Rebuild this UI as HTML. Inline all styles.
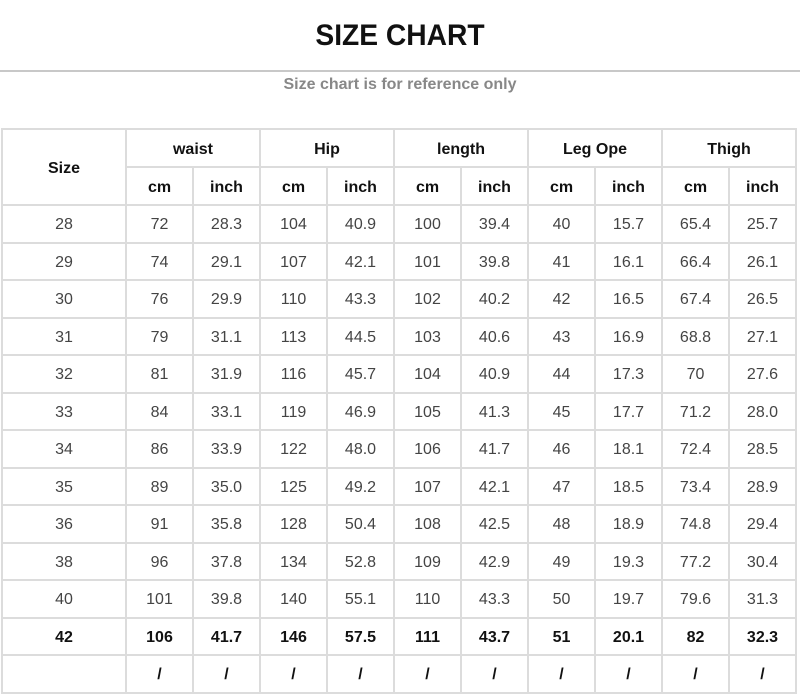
<!DOCTYPE html>
<html><head><style>
body{margin:0;width:800px;height:692px;background:#fff;font-family:"Liberation Sans",Arial,sans-serif;position:relative;overflow:hidden}
.t{position:absolute;top:19px;left:0;width:800px;text-align:center;font-size:30px;font-weight:bold;color:#111;transform:scaleX(0.94)}
.hr{position:absolute;top:70px;left:0;width:800px;height:2px;background:#c8c8c8}
.s{position:absolute;top:76px;left:0;width:800px;text-align:center;font-size:16px;font-weight:bold;color:#888}
table{position:absolute;top:128px;left:1px;border-collapse:collapse;table-layout:fixed}
td{border:2px solid #dcdcdc;text-align:center;font-size:16px;color:#444;padding:3px 0 0 0;height:32.5px}
.h td,.h2 td{font-weight:bold;color:#111;height:33px}
.b td{font-weight:bold;color:#111}
</style></head><body>
<div class="t">SIZE CHART</div>
<div class="hr"></div>
<div class="s">Size chart is for reference only</div>
<table>
<colgroup><col style="width:124px"><col span="10" style="width:67px"></colgroup>
<tr class="h"><td rowspan="2">Size</td><td colspan="2">waist</td><td colspan="2">Hip</td><td colspan="2">length</td><td colspan="2">Leg Ope</td><td colspan="2">Thigh</td></tr>
<tr class="h2"><td>cm</td><td>inch</td><td>cm</td><td>inch</td><td>cm</td><td>inch</td><td>cm</td><td>inch</td><td>cm</td><td>inch</td></tr>
<tr><td>28</td><td>72</td><td>28.3</td><td>104</td><td>40.9</td><td>100</td><td>39.4</td><td>40</td><td>15.7</td><td>65.4</td><td>25.7</td></tr>
<tr><td>29</td><td>74</td><td>29.1</td><td>107</td><td>42.1</td><td>101</td><td>39.8</td><td>41</td><td>16.1</td><td>66.4</td><td>26.1</td></tr>
<tr><td>30</td><td>76</td><td>29.9</td><td>110</td><td>43.3</td><td>102</td><td>40.2</td><td>42</td><td>16.5</td><td>67.4</td><td>26.5</td></tr>
<tr><td>31</td><td>79</td><td>31.1</td><td>113</td><td>44.5</td><td>103</td><td>40.6</td><td>43</td><td>16.9</td><td>68.8</td><td>27.1</td></tr>
<tr><td>32</td><td>81</td><td>31.9</td><td>116</td><td>45.7</td><td>104</td><td>40.9</td><td>44</td><td>17.3</td><td>70</td><td>27.6</td></tr>
<tr><td>33</td><td>84</td><td>33.1</td><td>119</td><td>46.9</td><td>105</td><td>41.3</td><td>45</td><td>17.7</td><td>71.2</td><td>28.0</td></tr>
<tr><td>34</td><td>86</td><td>33.9</td><td>122</td><td>48.0</td><td>106</td><td>41.7</td><td>46</td><td>18.1</td><td>72.4</td><td>28.5</td></tr>
<tr><td>35</td><td>89</td><td>35.0</td><td>125</td><td>49.2</td><td>107</td><td>42.1</td><td>47</td><td>18.5</td><td>73.4</td><td>28.9</td></tr>
<tr><td>36</td><td>91</td><td>35.8</td><td>128</td><td>50.4</td><td>108</td><td>42.5</td><td>48</td><td>18.9</td><td>74.8</td><td>29.4</td></tr>
<tr><td>38</td><td>96</td><td>37.8</td><td>134</td><td>52.8</td><td>109</td><td>42.9</td><td>49</td><td>19.3</td><td>77.2</td><td>30.4</td></tr>
<tr><td>40</td><td>101</td><td>39.8</td><td>140</td><td>55.1</td><td>110</td><td>43.3</td><td>50</td><td>19.7</td><td>79.6</td><td>31.3</td></tr>
<tr class="b"><td>42</td><td>106</td><td>41.7</td><td>146</td><td>57.5</td><td>111</td><td>43.7</td><td>51</td><td>20.1</td><td>82</td><td>32.3</td></tr>
<tr class="b"><td></td><td>/</td><td>/</td><td>/</td><td>/</td><td>/</td><td>/</td><td>/</td><td>/</td><td>/</td><td>/</td></tr>
</table>
</body></html>
